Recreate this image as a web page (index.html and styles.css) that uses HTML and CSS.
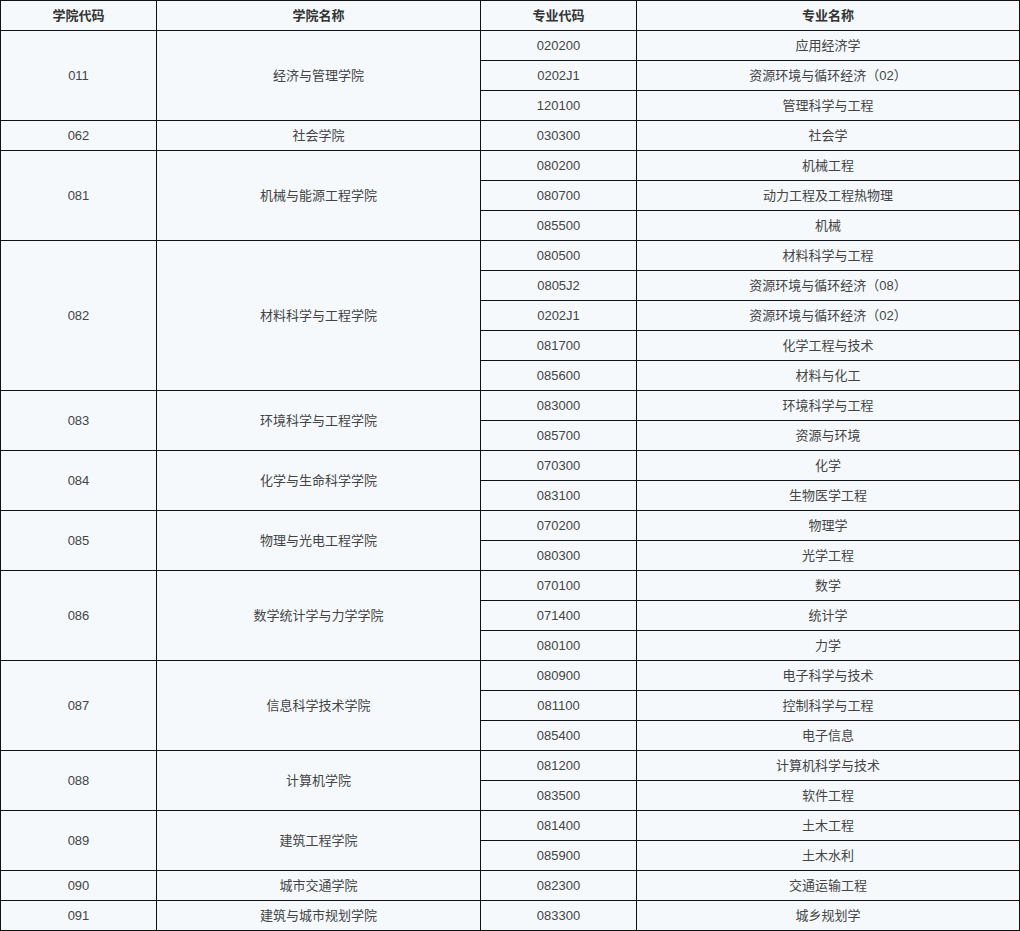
FILE: index.html
```html
<!DOCTYPE html>
<html lang="zh-CN">
<head>
<meta charset="utf-8">
<link rel="stylesheet" href="styles.css">
</head>
<body>
<table class="majors">
<colgroup><col class="c1"><col class="c2"><col class="c3"><col class="c4"></colgroup>
<thead>
<tr><th>学院代码</th><th>学院名称</th><th>专业代码</th><th>专业名称</th></tr>
</thead>
<tbody>
<tr><td rowspan="3">011</td><td rowspan="3">经济与管理学院</td><td>020200</td><td>应用经济学</td></tr>
<tr><td>0202J1</td><td>资源环境与循环经济（02）</td></tr>
<tr><td>120100</td><td>管理科学与工程</td></tr>
<tr><td>062</td><td>社会学院</td><td>030300</td><td>社会学</td></tr>
<tr><td rowspan="3">081</td><td rowspan="3">机械与能源工程学院</td><td>080200</td><td>机械工程</td></tr>
<tr><td>080700</td><td>动力工程及工程热物理</td></tr>
<tr><td>085500</td><td>机械</td></tr>
<tr><td rowspan="5">082</td><td rowspan="5">材料科学与工程学院</td><td>080500</td><td>材料科学与工程</td></tr>
<tr><td>0805J2</td><td>资源环境与循环经济（08）</td></tr>
<tr><td>0202J1</td><td>资源环境与循环经济（02）</td></tr>
<tr><td>081700</td><td>化学工程与技术</td></tr>
<tr><td>085600</td><td>材料与化工</td></tr>
<tr><td rowspan="2">083</td><td rowspan="2">环境科学与工程学院</td><td>083000</td><td>环境科学与工程</td></tr>
<tr><td>085700</td><td>资源与环境</td></tr>
<tr><td rowspan="2">084</td><td rowspan="2">化学与生命科学学院</td><td>070300</td><td>化学</td></tr>
<tr><td>083100</td><td>生物医学工程</td></tr>
<tr><td rowspan="2">085</td><td rowspan="2">物理与光电工程学院</td><td>070200</td><td>物理学</td></tr>
<tr><td>080300</td><td>光学工程</td></tr>
<tr><td rowspan="3">086</td><td rowspan="3">数学统计学与力学学院</td><td>070100</td><td>数学</td></tr>
<tr><td>071400</td><td>统计学</td></tr>
<tr><td>080100</td><td>力学</td></tr>
<tr><td rowspan="3">087</td><td rowspan="3">信息科学技术学院</td><td>080900</td><td>电子科学与技术</td></tr>
<tr><td>081100</td><td>控制科学与工程</td></tr>
<tr><td>085400</td><td>电子信息</td></tr>
<tr><td rowspan="2">088</td><td rowspan="2">计算机学院</td><td>081200</td><td>计算机科学与技术</td></tr>
<tr><td>083500</td><td>软件工程</td></tr>
<tr><td rowspan="2">089</td><td rowspan="2">建筑工程学院</td><td>081400</td><td>土木工程</td></tr>
<tr><td>085900</td><td>土木水利</td></tr>
<tr><td>090</td><td>城市交通学院</td><td>082300</td><td>交通运输工程</td></tr>
<tr><td>091</td><td>建筑与城市规划学院</td><td>083300</td><td>城乡规划学</td></tr>
</tbody>
</table>
</body>
</html>
```
FILE: styles.css
```css
html, body {
  margin: 0;
  padding: 0;
  background: #ffffff;
}
.majors {
  border-collapse: collapse;
  table-layout: fixed;
  width: 1019px;
  background: #f5f9fc;
  font-family: "Liberation Sans", "Noto Sans CJK SC", sans-serif;
  font-size: 13px;
  color: #444;
}
.majors .c1 { width: 156px; }
.majors .c2 { width: 324px; }
.majors .c3 { width: 156px; }
.majors .c4 { width: 383px; }
.majors tr { height: 30px; }
.majors th,
.majors td {
  border: 1px solid #111;
  padding: 1px 0 0;
  text-align: center;
  vertical-align: middle;
  line-height: 16px;
}
.majors th {
  font-weight: bold;
  color: #333;
}
```
